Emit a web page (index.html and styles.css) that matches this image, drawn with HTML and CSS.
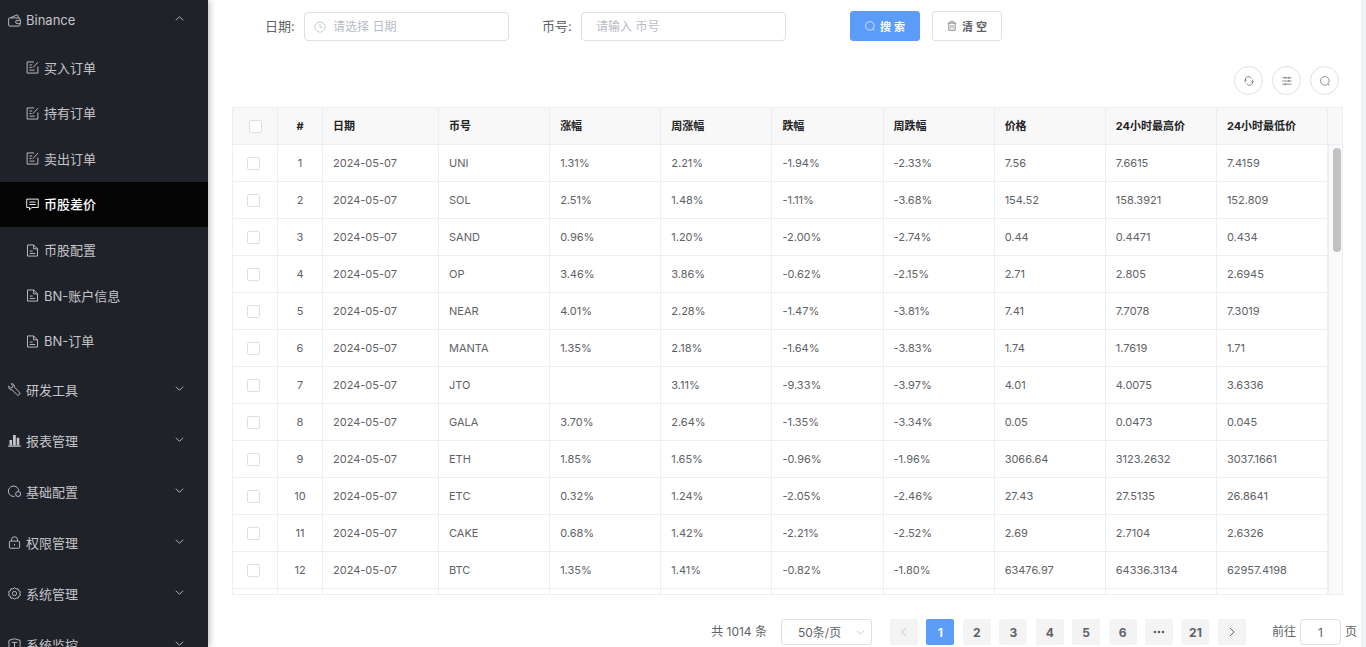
FILE: index.html
```html
<!DOCTYPE html>
<html lang="zh-CN">
<head>
<meta charset="utf-8">
<title>币股差价</title>
<link rel="stylesheet" href="styles.css">
</head>
<body>
<svg class="sprite" aria-hidden="true">
  <symbol id="i-down" viewBox="0 0 10 10"><path d="M1 3l4 4 4-4"/></symbol>
  <symbol id="i-edit" viewBox="0 0 14 14"><path d="M8.5 1H1.200v12h11.600V6M3.700 4.300h3M3.700 7h2.300M3.700 9.800h5.600M13 1.200L7.400 7.200"/></symbol>
  <symbol id="i-doc" viewBox="0 0 14 14"><path d="M1.600 1h6.600l4.200 4.200V13H1.600zM8.200 1v4.200h4.200M4 7.600h3.200M4 10.200h6"/></symbol>
  <symbol id="i-search" viewBox="0 0 14 14"><circle cx="6.800" cy="6.800" r="6"/><path d="M11 11.200l2.200 2.200"/></symbol>
</svg>
<div class="layout">
  <nav class="sidebar">
    <button class="group group-first" type="button">
      <svg class="icon" viewBox="0 0 14 14"><path d="M1.600 4.200h10.200q1 0 1 1v1.600M12.800 10.400v1.600q0 1-1 1H1.700q-1 0-1-1V5.200q0-1 1-1M2.600 4l7-2.900q.8-.3 1 .4l.5 2.400M13.500 6.800H10a1.800 1.800 0 0 0 0 3.600h3.500zM9.900 8.600h.6"/></svg>
      <span>Binance</span><svg class="arrow arrow-up"><use href="#i-down"/></svg>
    </button>
    <div class="submenu">
      <a class="item" href="#"><svg class="icon"><use href="#i-edit"/></svg>买入订单</a>
      <a class="item" href="#"><svg class="icon"><use href="#i-edit"/></svg>持有订单</a>
      <a class="item" href="#"><svg class="icon"><use href="#i-edit"/></svg>卖出订单</a>
      <a class="item active" href="#"><svg class="icon" viewBox="0 0 14 14"><path d="M.8 1.200h12.400v9H6.400L3.800 12.800v-2.600h-3zM3.600 4.400h6.800M3.600 7h6.800"/></svg>币股差价</a>
      <a class="item" href="#"><svg class="icon"><use href="#i-doc"/></svg>币股配置</a>
      <a class="item" href="#"><svg class="icon"><use href="#i-doc"/></svg>BN-账户信息</a>
      <a class="item" href="#"><svg class="icon"><use href="#i-doc"/></svg>BN-订单</a>
    </div>
    <button class="group" type="button">
      <svg class="icon" viewBox="0 0 14 14"><path d="M3.300.9L5.400 3 4.800 4.900 2.900 5.400.8 3.400C.4 5.800 2 7.600 4.400 7.400l5.400 5.300c1.600 1.300 4-.9 2.700-2.700L7 4.600C7.400 2.200 5.600.4 3.300.9zM11 11.200h.3"/></svg>
      <span>研发工具</span><svg class="arrow"><use href="#i-down"/></svg>
    </button>
    <button class="group" type="button">
      <svg class="icon solid" viewBox="0 0 14 14"><path d="M.2 12.500h13.600v1.200H.2zM1.600 6.500h2.800v5.500H1.600zM5.400 1h3v11h-3zM9.400 4h2.800v8H9.400z"/></svg>
      <span>报表管理</span><svg class="arrow"><use href="#i-down"/></svg>
    </button>
    <button class="group" type="button">
      <svg class="icon" viewBox="0 0 14 14"><path d="M7.200 12.200A5.600 5.600 0 1 1 11.600 6.200"/><circle cx="10.900" cy="9.700" r="2.700"/></svg>
      <span>基础配置</span><svg class="arrow"><use href="#i-down"/></svg>
    </button>
    <button class="group" type="button">
      <svg class="icon" viewBox="0 0 14 14"><rect x="1.500" y="5.500" width="11" height="7.700" rx="1"/><path d="M3.800 5.500V4a3.200 3.200 0 0 1 6.400 0v1.500M7 8.500v1.700"/></svg>
      <span>权限管理</span><svg class="arrow"><use href="#i-down"/></svg>
    </button>
    <button class="group" type="button">
      <svg class="icon" viewBox="0 0 14 14"><path d="M7 .7l1.700 1.500 2.200-.3.600 2.200 2 1L12.700 7l.8 2-2 .9-.6 2.200-2.200-.3L7 13.300l-1.700-1.500-2.200.3-.6-2.200-2-.9L1.300 7l-.8-1.900 2-1 .6-2.200 2.200.3z"/><circle cx="7" cy="7" r="2.300"/></svg>
      <span>系统管理</span><svg class="arrow"><use href="#i-down"/></svg>
    </button>
    <button class="group" type="button">
      <svg class="icon" viewBox="0 0 14 14"><path d="M1 2.500L7 .8l6 1.700v6c0 2.600-2.600 4-6 5-3.400-1-6-2.400-6-5zM4 4.700h6M7 4.700v5"/></svg>
      <span>系统监控</span><svg class="arrow"><use href="#i-down"/></svg>
    </button>
  </nav>
  <main class="main">
    <form class="search">
      <label class="label" for="date">日期:</label>
      <div class="field">
        <svg class="clock" viewBox="0 0 14 14"><circle cx="7" cy="7" r="6"/><path d="M7 3.500V7.500h3"/></svg>
        <input class="input input-date" id="date" type="text" placeholder="请选择 日期">
      </div>
      <label class="label label-next" for="coin">币号:</label>
      <div class="field"><input class="input" id="coin" type="text" placeholder="请输入 币号"></div>
      <div class="actions">
        <button class="btn primary" type="button"><svg class="btn-icon"><use href="#i-search"/></svg>搜 索</button>
        <button class="btn" type="button"><svg class="btn-icon" viewBox="0 0 14 14"><path d="M1 3h12M4.500 3V1h5v2M2.500 3v10h9V3M5.500 5.500v5M8.500 5.500v5"/></svg>清 空</button>
      </div>
    </form>
    <div class="tools">
      <button class="round" type="button" aria-label="刷新"><svg class="tool-icon" viewBox="0 0 14 14"><path d="M1.800 9V5.500a4.500 4.500 0 0 1 8.500-2.200M12.200 5v3.500a4.500 4.500 0 0 1-8.500 2.200M.5 6.500l1.300-1.700 1.700 1.200M10.500 8l1.700 1.200L13.500 7.500"/></svg></button>
      <button class="round" type="button" aria-label="列设置"><svg class="tool-icon" viewBox="0 0 14 14"><path d="M.5 2.500h13M.5 7h13M.5 11.500h13M9.500 1v3M4.500 1v3M9.500 5.500v3M4.500 10v3"/></svg></button>
      <button class="round" type="button" aria-label="搜索"><svg class="tool-icon"><use href="#i-search"/></svg></button>
    </div>
    <div class="table-box">
      <table class="table">
        <colgroup><col class="col-check"><col class="col-index"><col class="col-date"><col><col><col><col><col><col><col><col></colgroup>
        <thead><tr><th class="check check-all"><input type="checkbox" aria-label="全选"></th><th class="index">#</th><th>日期</th><th>币号</th><th>涨幅</th><th>周涨幅</th><th>跌幅</th><th>周跌幅</th><th>价格</th><th>24小时最高价</th><th>24小时最低价</th></tr></thead>
        <tbody>
          <tr><td class="check"><input type="checkbox" aria-label="选择 1"></td><td class="index">1</td><td>2024-05-07</td><td>UNI</td><td>1.31%</td><td>2.21%</td><td>-1.94%</td><td>-2.33%</td><td>7.56</td><td>7.6615</td><td>7.4159</td></tr>
          <tr><td class="check"><input type="checkbox" aria-label="选择 2"></td><td class="index">2</td><td>2024-05-07</td><td>SOL</td><td>2.51%</td><td>1.48%</td><td>-1.11%</td><td>-3.68%</td><td>154.52</td><td>158.3921</td><td>152.809</td></tr>
          <tr><td class="check"><input type="checkbox" aria-label="选择 3"></td><td class="index">3</td><td>2024-05-07</td><td>SAND</td><td>0.96%</td><td>1.20%</td><td>-2.00%</td><td>-2.74%</td><td>0.44</td><td>0.4471</td><td>0.434</td></tr>
          <tr><td class="check"><input type="checkbox" aria-label="选择 4"></td><td class="index">4</td><td>2024-05-07</td><td>OP</td><td>3.46%</td><td>3.86%</td><td>-0.62%</td><td>-2.15%</td><td>2.71</td><td>2.805</td><td>2.6945</td></tr>
          <tr><td class="check"><input type="checkbox" aria-label="选择 5"></td><td class="index">5</td><td>2024-05-07</td><td>NEAR</td><td>4.01%</td><td>2.28%</td><td>-1.47%</td><td>-3.81%</td><td>7.41</td><td>7.7078</td><td>7.3019</td></tr>
          <tr><td class="check"><input type="checkbox" aria-label="选择 6"></td><td class="index">6</td><td>2024-05-07</td><td>MANTA</td><td>1.35%</td><td>2.18%</td><td>-1.64%</td><td>-3.83%</td><td>1.74</td><td>1.7619</td><td>1.71</td></tr>
          <tr><td class="check"><input type="checkbox" aria-label="选择 7"></td><td class="index">7</td><td>2024-05-07</td><td>JTO</td><td></td><td>3.11%</td><td>-9.33%</td><td>-3.97%</td><td>4.01</td><td>4.0075</td><td>3.6336</td></tr>
          <tr><td class="check"><input type="checkbox" aria-label="选择 8"></td><td class="index">8</td><td>2024-05-07</td><td>GALA</td><td>3.70%</td><td>2.64%</td><td>-1.35%</td><td>-3.34%</td><td>0.05</td><td>0.0473</td><td>0.045</td></tr>
          <tr><td class="check"><input type="checkbox" aria-label="选择 9"></td><td class="index">9</td><td>2024-05-07</td><td>ETH</td><td>1.85%</td><td>1.65%</td><td>-0.96%</td><td>-1.96%</td><td>3066.64</td><td>3123.2632</td><td>3037.1661</td></tr>
          <tr><td class="check"><input type="checkbox" aria-label="选择 10"></td><td class="index">10</td><td>2024-05-07</td><td>ETC</td><td>0.32%</td><td>1.24%</td><td>-2.05%</td><td>-2.46%</td><td>27.43</td><td>27.5135</td><td>26.8641</td></tr>
          <tr><td class="check"><input type="checkbox" aria-label="选择 11"></td><td class="index">11</td><td>2024-05-07</td><td>CAKE</td><td>0.68%</td><td>1.42%</td><td>-2.21%</td><td>-2.52%</td><td>2.69</td><td>2.7104</td><td>2.6326</td></tr>
          <tr><td class="check"><input type="checkbox" aria-label="选择 12"></td><td class="index">12</td><td>2024-05-07</td><td>BTC</td><td>1.35%</td><td>1.41%</td><td>-0.82%</td><td>-1.80%</td><td>63476.97</td><td>64336.3134</td><td>62957.4198</td></tr>
          <tr><td></td><td></td><td></td><td></td><td></td><td></td><td></td><td></td><td></td><td></td><td></td></tr>
        </tbody>
      </table>
      <div class="gutter"><div class="gutter-head"></div><div class="track"><div class="thumb"></div></div></div>
    </div>
    <div class="pagination">
      <span class="total">共 1014 条</span>
      <div class="size">
        <select class="size-select" aria-label="每页条数"><option>50条/页</option></select>
        <svg class="size-arrow"><use href="#i-down"/></svg>
      </div>
      <div class="pages">
        <button class="page" type="button" aria-label="上一页" disabled><svg class="page-arrow prev"><use href="#i-down"/></svg></button>
        <button class="page current" type="button">1</button>
        <button class="page" type="button">2</button>
        <button class="page" type="button">3</button>
        <button class="page" type="button">4</button>
        <button class="page" type="button">5</button>
        <button class="page" type="button">6</button>
        <button class="page" type="button" aria-label="更多"><svg class="dots" viewBox="0 0 12 4"><circle cx="2" cy="2" r="1.300"/><circle cx="6" cy="2" r="1.300"/><circle cx="10" cy="2" r="1.300"/></svg></button>
        <button class="page" type="button">21</button>
        <button class="page" type="button" aria-label="下一页"><svg class="page-arrow next"><use href="#i-down"/></svg></button>
      </div>
      <label class="jump">前往<input class="jump-input" type="text" value="1">页</label>
    </div>
  </main>
</div>
</body>
</html>
```
FILE: styles.css
```css
* { box-sizing: border-box; }
body {
  margin: 0;
  height: 100vh;
  overflow: hidden;
  background: #f0f2f5;
  color: #606266;
  font: 13px/20px Inter, "Noto Sans CJK SC", sans-serif;
}
button, input, select { font-family: inherit; margin: 0; }
svg { fill: none; stroke: currentColor; flex: none; }
.sprite { display: none; }
.layout { display: flex; height: 100vh; }

.sidebar {
  flex: none;
  width: 208px;
  background: #20222a;
  color: #c4c5c7;
  box-shadow: 2px 0 6px rgba(0, 21, 41, 0.25);
  z-index: 1;
}
.group {
  display: flex;
  align-items: center;
  gap: 5px;
  width: 100%;
  height: 51px;
  padding: 0 24px 0 8px;
  border: 0;
  background: none;
  color: inherit;
  font-size: 13px;
  line-height: 20px;
}
.group-first { height: 45px; padding-bottom: 5px; }
.icon { width: 13px; height: 13px; }
.solid { fill: currentColor; stroke: none; }
.arrow { width: 9px; height: 9px; margin: 0 0 3px auto; }
.arrow-up { transform: rotate(180deg); }
.submenu { display: grid; grid-auto-rows: 1fr; height: 319px; }
.item {
  display: flex;
  align-items: center;
  gap: 5px;
  padding-left: 26px;
  color: inherit;
  text-decoration: none;
}
.active { background: #040405; color: #fff; font-weight: 500; }

.main {
  flex: 1;
  min-width: 0;
  margin-right: 5px;
  padding: 11px 4px 0 24px;
  background: #fff;
}
.search { display: flex; align-items: center; padding-left: 33px; }
.label { width: 28px; margin-right: 11px; white-space: nowrap; font-size: 13px; }
.label-next { margin-left: 33px; }
.field { display: flex; position: relative; width: 205px; }
.clock { position: absolute; left: 10px; top: 9px; width: 12px; height: 12px; color: #c0c4cc; }
.input {
  width: 100%;
  height: 29px;
  padding: 0 14px;
  border: 1px solid #dcdfe6;
  border-radius: 4px;
  background: #fff;
  font-size: 12px;
}
.input-date { padding-left: 28px; }
.input::placeholder { color: #b8bcc5; opacity: 1; }
.actions { display: flex; gap: 12px; margin-left: 64px; }
.btn {
  display: flex;
  align-items: center;
  justify-content: center;
  gap: 5px;
  width: 70px;
  height: 30px;
  padding: 0;
  border: 1px solid #dcdfe6;
  border-radius: 3px;
  background: #fff;
  color: #606266;
  font-size: 11px;
  font-weight: 600;
}
.primary { border-color: #5a9cf8; background: #5a9cf8; color: #fff; }
.btn-icon { width: 10px; height: 10px; }
.tools { display: flex; justify-content: flex-end; gap: 9px; padding: 25px 18px 12px 0; }
.round {
  display: flex;
  align-items: center;
  justify-content: center;
  width: 29px;
  height: 29px;
  padding: 0;
  border: 1px solid #dcdfe6;
  border-radius: 50%;
  background: #fff;
  color: #606266;
}
.tool-icon { width: 10px; height: 10px; }

.table-box {
  display: flex;
  align-items: flex-start;
  height: calc(100vh - 159px);
  margin-right: 14px;
  overflow: hidden;
  border: 1px solid #ebeef5;
}
.table {
  flex: 1;
  width: 100%;
  min-width: 0;
  table-layout: fixed;
  border-collapse: separate;
  border-spacing: 0;
}
.col-check, .col-index { width: 45px; }
.col-date { width: 116px; }
.table th, .table td {
  height: 37px;
  padding: 0 10px;
  border-right: 1px solid #ebeef5;
  border-bottom: 1px solid #ebeef5;
  font-size: 11px;
  line-height: 16px;
  text-align: left;
  white-space: nowrap;
}
.table th { background: #f8f8f9; color: #222; font-weight: 700; }
.table .index { text-align: center; }
.table .check { padding: 0 4px 0 0; text-align: center; }
.table .check-all { padding: 0; }
.check input {
  display: block;
  appearance: none;
  width: 13px;
  height: 13px;
  margin: 0 auto;
  border: 1px solid #dcdfe6;
  border-radius: 2px;
  background: #fff;
}
.gutter { display: flex; flex-direction: column; flex: none; width: 14px; height: 100%; }
.gutter-head { height: 37px; background: #f8f8f9; border-bottom: 1px solid #ebeef5; }
.track { flex: 1; padding: 3px 1px 0 3px; background: #fafafa; border-left: 1px solid #ebeef5; }
.thumb { width: 8px; height: 104px; margin-left: auto; border-radius: 4px; background: #c1c1c1; }

.pagination {
  display: flex;
  align-items: center;
  justify-content: flex-end;
  padding-top: 24px;
  font-size: 12px;
  white-space: nowrap;
}
.size { position: relative; margin: 0 18px 0 14px; }
.size-select {
  display: block;
  appearance: none;
  width: 91px;
  height: 26px;
  padding: 0 16px;
  border: 1px solid #dcdfe6;
  border-radius: 3px;
  background: #fff;
  color: #606266;
  font-size: 12px;
}
.size-arrow { position: absolute; right: 7px; top: 9px; width: 9px; height: 9px; color: #c0c4cc; pointer-events: none; }
.pages { display: flex; justify-content: space-between; width: 356px; }
.page {
  display: flex;
  align-items: center;
  justify-content: center;
  width: 28px;
  height: 26px;
  padding: 0;
  border: 0;
  border-radius: 2px;
  background: #f4f4f5;
  color: #606266;
  font-size: 12px;
  font-weight: 700;
}
.page:disabled { color: #c0c4cc; }
.current { background: #5a9cf8; color: #fff; }
.page-arrow { width: 10px; height: 10px; }
.prev { transform: rotate(90deg); }
.next { transform: rotate(-90deg); }
.dots { width: 12px; height: 4px; fill: currentColor; stroke: none; }
.jump { display: flex; align-items: center; gap: 4px; margin-left: 26px; }
.jump-input {
  width: 41px;
  height: 26px;
  padding: 0;
  border: 1px solid #dcdfe6;
  border-radius: 4px;
  background: #fff;
  color: #606266;
  font-size: 12px;
  text-align: center;
}
```
